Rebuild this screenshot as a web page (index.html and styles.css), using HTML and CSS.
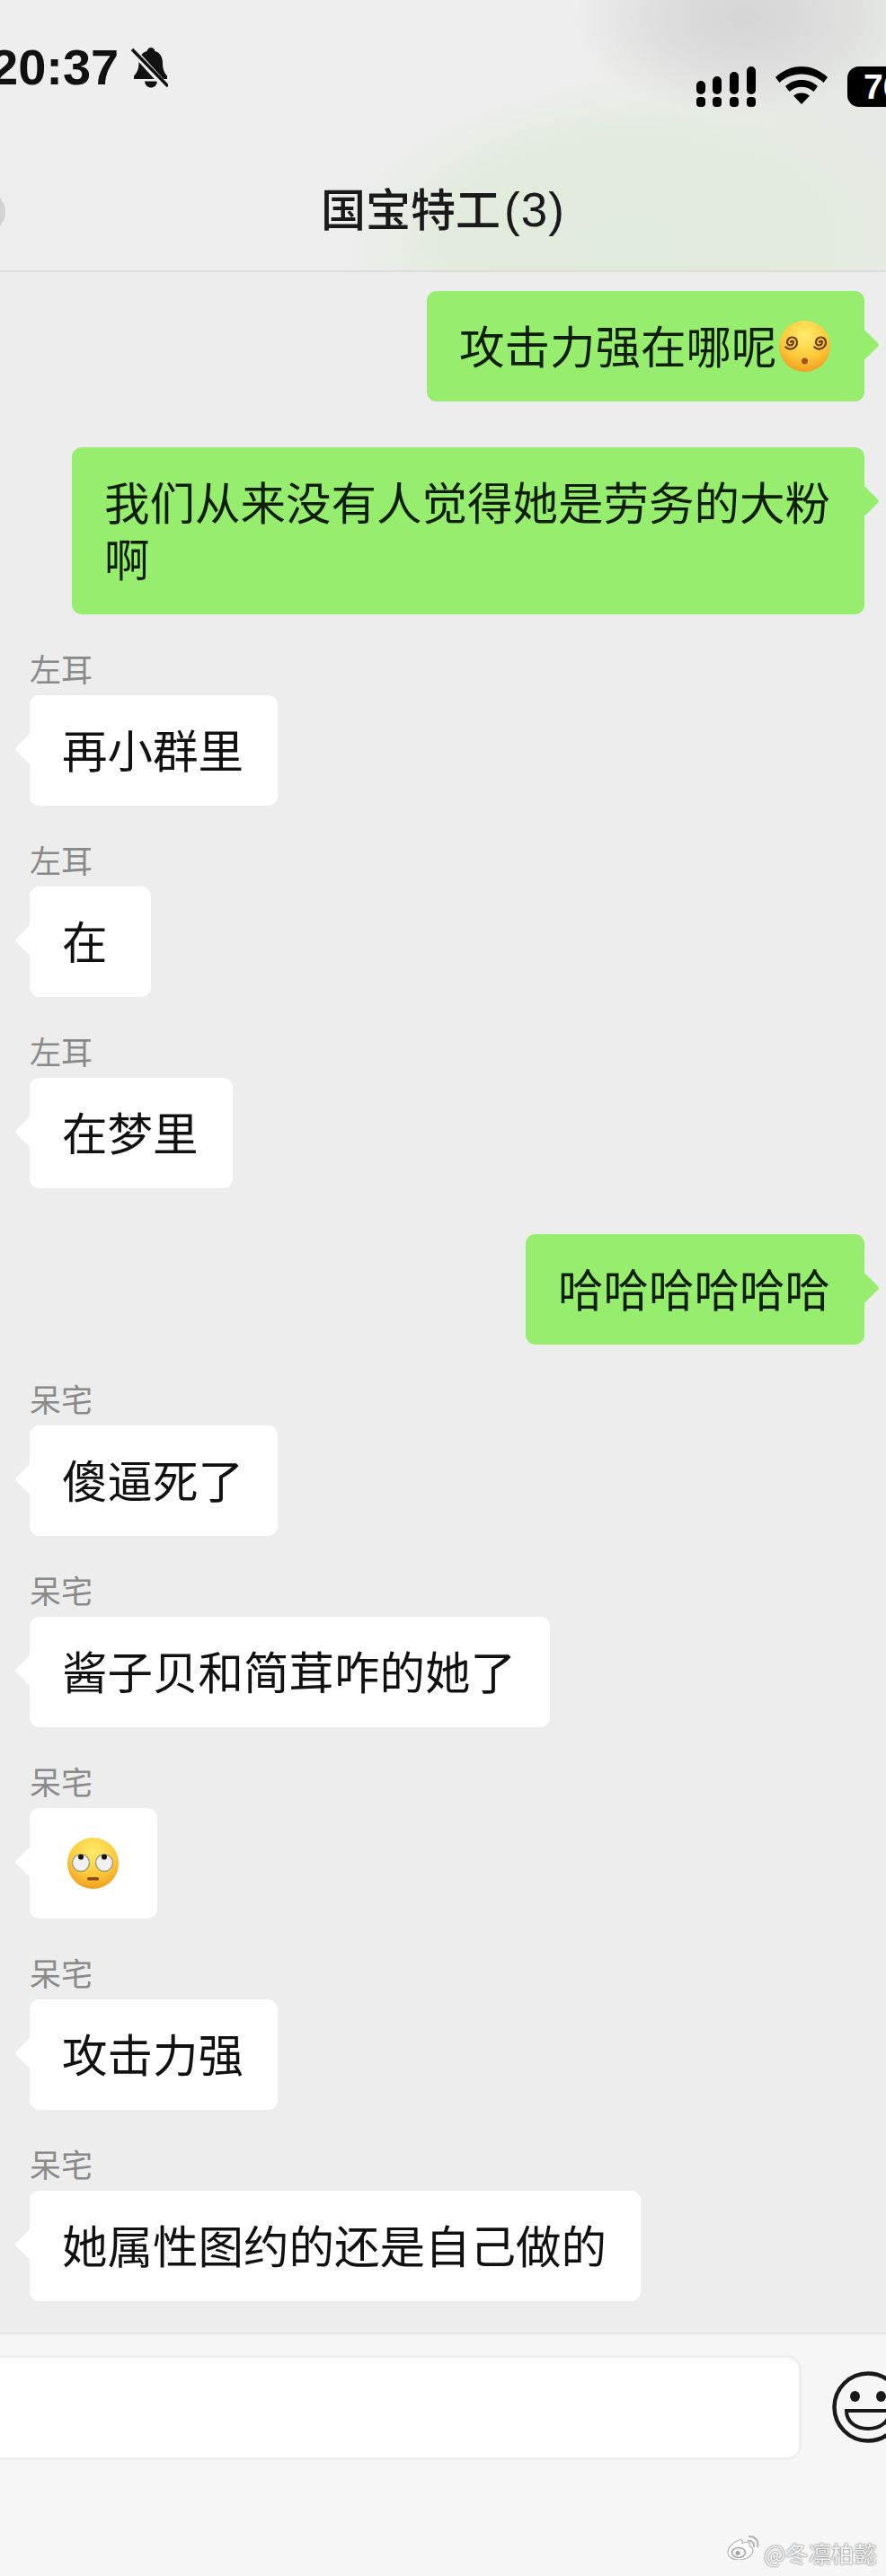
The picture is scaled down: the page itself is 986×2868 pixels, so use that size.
FILE: index.html
```html
<!DOCTYPE html>
<html lang="zh">
<head>
    <meta charset="utf-8">
    <title>国宝特工(3)</title>
    <link rel="stylesheet" href="styles.css">
</head>
<body>
    <div class="phone">
        <header class="top-bar">
            <div class="status-bar">
                <div class="status-left">
                    <span class="clock">20:37</span>
                    <svg class="bell" viewBox="0 0 41 46">
                        <path d="M22 1c2.500 0 4 1.800 4.300 3.800C32.500 6.800 35 12 35 18c0 7 1.800 11 5 14.500V36H3v-3.500c3.500-3.500 5.500-8 5.500-14.500 0-6 3-11.200 9.200-13.200C18 2.800 19.500 1 22 1z" fill="#111"/>
                        <path d="M15 38.500h14c-.5 4.500-3.500 7-7 7s-6.500-2.500-7-7z" fill="#111"/>
                        <path d="M-1 1l42 46" stroke="#eee" stroke-width="7.500"/>
                        <path d="M1 3l40 41" stroke="#111" stroke-width="3.500"/>
                    </svg>
                </div>
                <div class="status-right">
                    <svg class="signal" viewBox="0 0 66 45">
                        <rect x="0" y="16" width="10" height="15" rx="5"/>
                        <rect x="18" y="11" width="10" height="20" rx="5"/>
                        <rect x="37" y="6" width="10" height="25" rx="5"/>
                        <rect x="56" y="0" width="10" height="31" rx="5"/>
                        <rect x="0" y="34" width="10" height="11" rx="4"/>
                        <rect x="18" y="34" width="10" height="11" rx="4"/>
                        <rect x="37" y="34" width="10" height="11" rx="4"/>
                        <rect x="56" y="34" width="10" height="11" rx="4"/>
                    </svg>
                    <svg class="wifi" viewBox="0 0 58 42">
                        <path d="M29 0c11 0 21 4.500 29 12l-4.500 6C47 12 38.500 8.500 29 8.500S11 12 4.500 18L0 12C8 4.500 18 0 29 0z"/>
                        <path d="M29 15c7 0 13 2.500 18 7l-4.500 6c-4-3.500-8.500-5.200-13.500-5.200S19.500 24.500 15.500 28L11 22c5-4.500 11-7 18-7z"/>
                        <path d="M29 29.500c3.500 0 6.500 1 9 3.200L29 42l-9-9.300c2.500-2.200 5.500-3.200 9-3.200z"/>
                    </svg>
                    <div class="battery">76</div>
                </div>
            </div>
            <div class="nav-bar">
                <span class="back-dot"></span>
                <h1 class="chat-title">国宝特工<span class="title-count">(3)</span></h1>
            </div>
        </header>

        <main class="chat">
            <div class="row sent first">
                <div class="bubble">攻击力强在哪呢<svg class="emoji" viewBox="0 0 57 57">
                    <defs>
                        <radialGradient id="faceA" cx="50%" cy="28%" r="75%">
                            <stop offset="0" stop-color="#ffec6b"/>
                            <stop offset="0.6" stop-color="#fdc93a"/>
                            <stop offset="1" stop-color="#ef9a1c"/>
                        </radialGradient>
                    </defs>
                    <circle cx="28.500" cy="28.500" r="28.500" fill="url(#faceA)"/>
                    <path d="M13 24A1.500 1.500 0 0 1 16 24A3.500 3.500 0 0 1 9 24A5.500 5.500 0 0 1 20 24A7.500 7.500 0 0 1 7.200 29.300" fill="none" stroke="#6b3a0c" stroke-width="2.200" stroke-linecap="round"/>
                    <path d="M45 24A1.500 1.500 0 0 1 48 24A3.500 3.500 0 0 1 41 24A5.500 5.500 0 0 1 52 24A7.500 7.500 0 0 1 39.200 29.300" fill="none" stroke="#6b3a0c" stroke-width="2.200" stroke-linecap="round"/>
                    <circle cx="28.500" cy="45" r="3.500" fill="#a2521a"/>
                </svg></div>
            </div>
            <div class="row sent">
                <div class="bubble">我们从来没有人觉得她是劳务的大粉<br>啊</div>
            </div>

            <div class="row received">
                <div class="sender">左耳</div>
                <div class="bubble">再小群里</div>
            </div>
            <div class="row received">
                <div class="sender">左耳</div>
                <div class="bubble">在</div>
            </div>
            <div class="row received">
                <div class="sender">左耳</div>
                <div class="bubble">在梦里</div>
            </div>

            <div class="row sent">
                <div class="bubble">哈哈哈哈哈哈</div>
            </div>

            <div class="row received">
                <div class="sender">呆宅</div>
                <div class="bubble">傻逼死了</div>
            </div>
            <div class="row received">
                <div class="sender">呆宅</div>
                <div class="bubble">酱子贝和简茸咋的她了</div>
            </div>
            <div class="row received">
                <div class="sender">呆宅</div>
                <div class="bubble"><svg class="emoji solo" viewBox="0 0 57 57">
                    <defs>
                        <radialGradient id="faceB" cx="50%" cy="28%" r="75%">
                            <stop offset="0" stop-color="#ffec6b"/>
                            <stop offset="0.6" stop-color="#fdc93a"/>
                            <stop offset="1" stop-color="#ef9a1c"/>
                        </radialGradient>
                    </defs>
                    <circle cx="28.500" cy="28.500" r="28.500" fill="url(#faceB)"/>
                    <circle cx="15" cy="28" r="9.500" fill="#f1f1f1" stroke="#a3a07c" stroke-width="1.500"/>
                    <circle cx="41" cy="28" r="9.500" fill="#f1f1f1" stroke="#a3a07c" stroke-width="1.500"/>
                    <circle cx="15" cy="21.500" r="3" fill="#111"/>
                    <circle cx="41" cy="21.500" r="3" fill="#111"/>
                    <rect x="22" y="44" width="13" height="3.500" rx="1.500" fill="#8a4a10"/>
                </svg></div>
            </div>
            <div class="row received">
                <div class="sender">呆宅</div>
                <div class="bubble">攻击力强</div>
            </div>
            <div class="row received">
                <div class="sender">呆宅</div>
                <div class="bubble">她属性图约的还是自己做的</div>
            </div>
        </main>

        <footer class="input-bar">
            <div class="input-box"></div>
            <svg class="smile" viewBox="0 0 80 80">
                <circle cx="40" cy="40" r="37.500" fill="none" stroke="#1a1a1a" stroke-width="4.500"/>
                <ellipse cx="25.500" cy="28" rx="5.500" ry="6" fill="#1a1a1a"/>
                <ellipse cx="54.500" cy="28" rx="5.500" ry="6" fill="#1a1a1a"/>
                <path d="M16 44h48c0 12-10 20-24 20S16 56 16 44z" fill="none" stroke="#1a1a1a" stroke-width="4"/>
            </svg>
            <div class="watermark">
                <svg class="weibo" viewBox="0 0 37 27">
                    <path d="M14 5C7 7 1 13 1 19c0 5 6 8 12 8 9 0 16-5 16-11 0-3-3-4-4-4.500 1-3-1-5-5-4l-3 1c1-3-.5-4.500-3-3.500z" fill="#fdfdfd" stroke="#b5b5b5" stroke-width="1.200"/>
                    <ellipse cx="13" cy="19" rx="7.500" ry="5.500" fill="#f6f6f6" stroke="#a5a5a5" stroke-width="1.500"/>
                    <circle cx="12" cy="19.500" r="2.500" fill="#a5a5a5"/>
                    <path d="M23 6c4-1 8 2 7 7M24 1c7-1 12 5 10 12" fill="none" stroke="#b5b5b5" stroke-width="2"/>
                </svg>
                <span class="watermark-text">@冬凛柏懿</span>
            </div>
        </footer>
    </div>
</body>
</html>
```

FILE: styles.css
```css
/* page */
html, body {
    margin: 0;
    padding: 0;
}
body {
    font-family: "Noto Sans CJK SC", "Liberation Sans", sans-serif;
    color: #111;
    background-color: #ededed;
}
.phone {
    width: 986px;
    height: 2868px;
    overflow: hidden;
    display: flex;
    flex-direction: column;
}

/* status bar and title */
.top-bar {
    height: 301px;
    flex-shrink: 0;
    border-bottom: 2px solid #dcdcdc;
    background-color: #eeeeee;
    background-image:
        radial-gradient(ellipse 190px 110px at 830px 20px, #d5d5d5 0%, #dcdcdc 45%, rgba(230, 230, 230, 0) 100%),
        radial-gradient(ellipse 320px 180px at 700px 270px, #e1ebdd 0%, #e2ebde 65%, rgba(226, 235, 222, 0) 100%),
        linear-gradient(100deg, rgba(238, 238, 238, 0) 60%, #e7eae4 90%);
}
.status-bar {
    display: flex;
    justify-content: space-between;
    height: 190px;
}
.status-left {
    display: flex;
    align-items: flex-start;
    gap: 14px;
    margin-left: -11px;
    padding-top: 52px;
}
.clock {
    font-family: "Liberation Sans", sans-serif;
    font-weight: 700;
    font-size: 56px;
    line-height: 46px;
}
.bell {
    width: 41px;
    height: 46px;
}
.status-right {
    display: flex;
    align-items: flex-start;
    padding-top: 74px;
    margin-right: -40px;
}
.signal {
    width: 66px;
    height: 45px;
    fill: #000;
}
.wifi {
    width: 58px;
    height: 42px;
    margin-left: 22px;
    fill: #000;
}
.battery {
    width: 83px;
    height: 45px;
    margin-left: 22px;
    padding-left: 18px;
    box-sizing: border-box;
    border-radius: 13px;
    background-color: #000;
    color: #fff;
    font-family: "Liberation Sans", sans-serif;
    font-weight: 700;
    font-size: 39px;
    line-height: 45px;
}
.nav-bar {
    position: relative;
    display: flex;
    justify-content: center;
}
.back-dot {
    position: absolute;
    left: -42px;
    top: 22px;
    width: 48px;
    height: 48px;
    border-radius: 50%;
    background-color: #d4d4d4;
}
.chat-title {
    margin: 9px 0 0;
    font-size: 50px;
    font-weight: 500;
    line-height: 62px;
    color: #1a1a1a;
}
.title-count {
    font-family: "Liberation Sans", sans-serif;
    font-size: 53px;
    margin-left: 4px;
    letter-spacing: 1px;
}

/* messages */
.chat {
    flex: 1;
    padding-top: 21px;
    background-color: #ededed;
}
.row {
    display: flex;
    flex-direction: column;
    align-items: flex-start;
}
.row.sent {
    align-items: flex-end;
    padding-right: 24px;
    margin-top: 51px;
}
.row.sent.first {
    margin-top: 0;
}
.row.received {
    padding-left: 33px;
    margin-top: 37px;
}
.sender {
    height: 45px;
    margin-bottom: 8px;
    font-size: 35px;
    line-height: 45px;
    color: #8a8a8a;
}
.bubble {
    position: relative;
    box-sizing: border-box;
    min-width: 135px;
    padding: 28px 38px 32px 36px;
    border-radius: 11px;
    font-size: 50.500px;
    line-height: 63px;
    color: #111;
    background-color: #fff;
}
.sent .bubble {
    background-color: #97ed6d;
    color: #0f1f06;
}
/* little triangle on the side of the bubble */
.bubble::before {
    content: "";
    position: absolute;
    top: 48px;
    width: 24px;
    height: 24px;
    border-radius: 3px;
    transform: rotate(45deg);
    background-color: inherit;
}
.received .bubble::before {
    left: -12px;
}
.sent .bubble::before {
    right: -12px;
}
.emoji {
    width: 57px;
    height: 57px;
    margin-left: 2.500px;
    vertical-align: -9px;
}
.emoji.solo {
    margin: 0 5px 0 6px;
}

/* input area */
.input-bar {
    position: relative;
    height: 269px;
    flex-shrink: 0;
    border-top: 2px solid #e2e2e2;
    background-color: #f6f6f6;
    display: flex;
    align-items: flex-start;
}
.input-box {
    width: 912px;
    height: 117px;
    margin: 23px 0 0 -20px;
    flex-shrink: 0;
    box-sizing: border-box;
    border: 3px solid #eeeeee;
    border-radius: 16px;
    background-color: #fff;
    box-shadow: inset 0 10px 8px -6px #fafafa;
}
.smile {
    width: 80px;
    height: 80px;
    margin: 41px 0 0 34px;
    flex-shrink: 0;
}
.watermark {
    position: absolute;
    right: 10px;
    bottom: 10px;
    display: flex;
    align-items: flex-start;
    gap: 4px;
}
.weibo {
    width: 37px;
    height: 27px;
    margin-top: -3px;
}
.watermark-text {
    font-size: 25.500px;
    line-height: 32px;
    color: #f4f4f4;
    text-shadow: 0 0 2px #888, 0 0 2px #888;
}
```
